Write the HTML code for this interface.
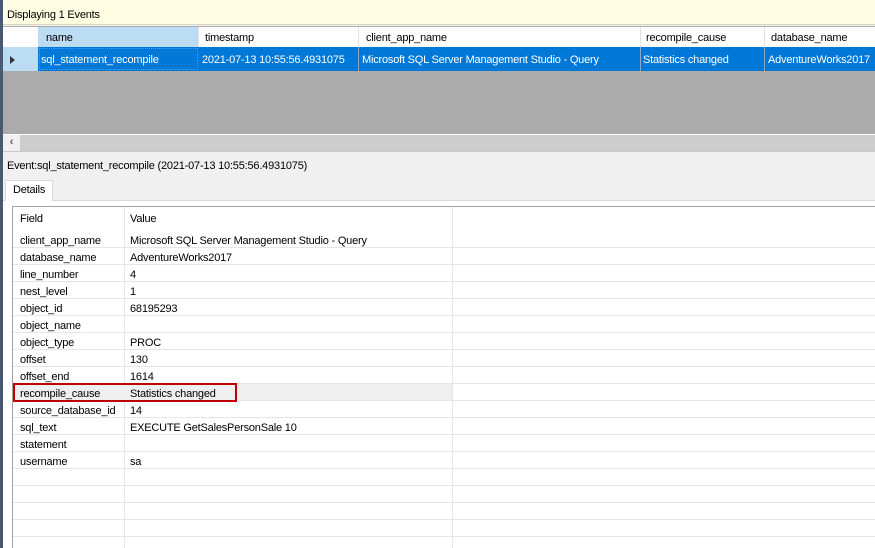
<!DOCTYPE html><html><head><style>
*{margin:0;padding:0;box-sizing:border-box}
body{width:875px;height:548px;overflow:hidden;background:#f0f0f0;font-family:"Liberation Sans",Arial,sans-serif;font-size:11px;color:#000;position:relative;letter-spacing:-0.2px}
.a{position:absolute;white-space:nowrap}
</style></head><body>
<div class="a" style="left:0;top:0;width:3px;height:548px;background:#4a5878"></div>
<div class="a" style="left:3px;top:0;width:872px;height:25px;background:#fffde2;border-bottom:1px solid #d8d6c0"></div>
<div class="a" style="left:7px;top:9px">Displaying 1 Events</div>
<div class="a" style="left:3px;top:26px;width:872px;height:108px;background:#ababab"></div>
<div class="a" style="left:3px;top:27px;width:872px;height:20px;background:#fff"></div>
<div class="a" style="left:38px;top:27px;width:160px;height:20px;background:#bcdcf4"></div>
<div class="a" style="left:46px;top:32px">name</div>
<div class="a" style="left:198px;top:27px;width:1px;height:20px;background:#e0e0e0"></div>
<div class="a" style="left:205px;top:32px">timestamp</div>
<div class="a" style="left:358px;top:27px;width:1px;height:20px;background:#e0e0e0"></div>
<div class="a" style="left:366px;top:32px">client_app_name</div>
<div class="a" style="left:640px;top:27px;width:1px;height:20px;background:#e0e0e0"></div>
<div class="a" style="left:646px;top:32px">recompile_cause</div>
<div class="a" style="left:764px;top:27px;width:1px;height:20px;background:#e0e0e0"></div>
<div class="a" style="left:771px;top:32px">database_name</div>
<div class="a" style="left:3px;top:47px;width:35px;height:24px;background:#bcdcf4"></div>
<div class="a" style="left:10px;top:56px;width:0;height:0;border-left:5px solid #333;border-top:4px solid transparent;border-bottom:4px solid transparent"></div>
<div class="a" style="left:38px;top:47px;width:837px;height:24px;background:#0078d7;color:#fff"></div>
<div class="a" style="left:39px;top:48px;width:159px;height:22px;border:1px dotted #c08040"></div>
<div class="a" style="left:41px;top:54px;color:#fff">sql_statement_recompile</div>
<div class="a" style="left:358px;top:47px;width:1px;height:24px;background:#8aa8c8"></div>
<div class="a" style="left:640px;top:47px;width:1px;height:24px;background:#8aa8c8"></div>
<div class="a" style="left:764px;top:47px;width:1px;height:24px;background:#8aa8c8"></div>
<div class="a" style="left:202px;top:54px;color:#fff">2021-07-13 10:55:56.4931075</div>
<div class="a" style="left:362px;top:54px;color:#fff">Microsoft SQL Server Management Studio - Query</div>
<div class="a" style="left:643px;top:54px;color:#fff">Statistics changed</div>
<div class="a" style="left:768px;top:54px;color:#fff">AdventureWorks2017</div>
<div class="a" style="left:3px;top:134px;width:872px;height:17px;background:#cdcdcd;border-top:1px solid #fff"></div>
<div class="a" style="left:3px;top:135px;width:17px;height:16px;background:#f0f0f0;text-align:center;font-weight:bold;color:#555;line-height:15px">&lsaquo;</div>
<div class="a" style="left:3px;top:151px;width:872px;height:1px;background:#c8c8c8"></div>
<div class="a" style="left:7px;top:160px">Event:sql_statement_recompile (2021-07-13 10:55:56.4931075)</div>
<div class="a" style="left:3px;top:200px;width:872px;height:348px;background:#fff;border-top:1px solid #d9d9d9"></div>
<div class="a" style="left:5px;top:180px;width:48px;height:21px;background:#fff;border:1px solid #d9d9d9;border-bottom:none"></div>
<div class="a" style="left:13px;top:184px">Details</div>
<div class="a" style="left:12px;top:206px;width:863px;height:342px;border-left:1px solid #a0a0a0;border-top:1px solid #a0a0a0;background:#fff"></div>
<div class="a" style="left:124px;top:207px;width:1px;height:341px;background:#e6e6e6"></div>
<div class="a" style="left:452px;top:207px;width:1px;height:341px;background:#e6e6e6"></div>
<div class="a" style="left:20px;top:213px">Field</div>
<div class="a" style="left:130px;top:213px">Value</div>
<div class="a" style="left:13px;top:384px;width:439px;height:17px;background:#efefef"></div>
<div id="rows"></div>
<div class="a" style="left:13px;top:383px;width:224px;height:19px;border:2px solid #c00000"></div>
<script>
var d=[["client_app_name","Microsoft SQL Server Management Studio - Query"],["database_name","AdventureWorks2017"],["line_number","4"],["nest_level","1"],["object_id","68195293"],["object_name",""],["object_type","PROC"],["offset","130"],["offset_end","1614"],["recompile_cause","Statistics changed"],["source_database_id","14"],["sql_text","EXECUTE GetSalesPersonSale 10"],["statement",""],["username","sa"],["",""],["",""],["",""],["",""]];
var h="";for(var i=0;i<d.length;i++){var t=231+17*i;
h+='<div class="a" style="left:13px;top:'+(t+16)+'px;width:862px;height:1px;background:#e6e6e6"></div>';
h+='<div class="a" style="left:20px;top:'+(t+4)+'px">'+d[i][0]+'</div><div class="a" style="left:130px;top:'+(t+4)+'px">'+d[i][1]+'</div>';}
document.getElementById("rows").innerHTML=h;
</script>
</body></html>
